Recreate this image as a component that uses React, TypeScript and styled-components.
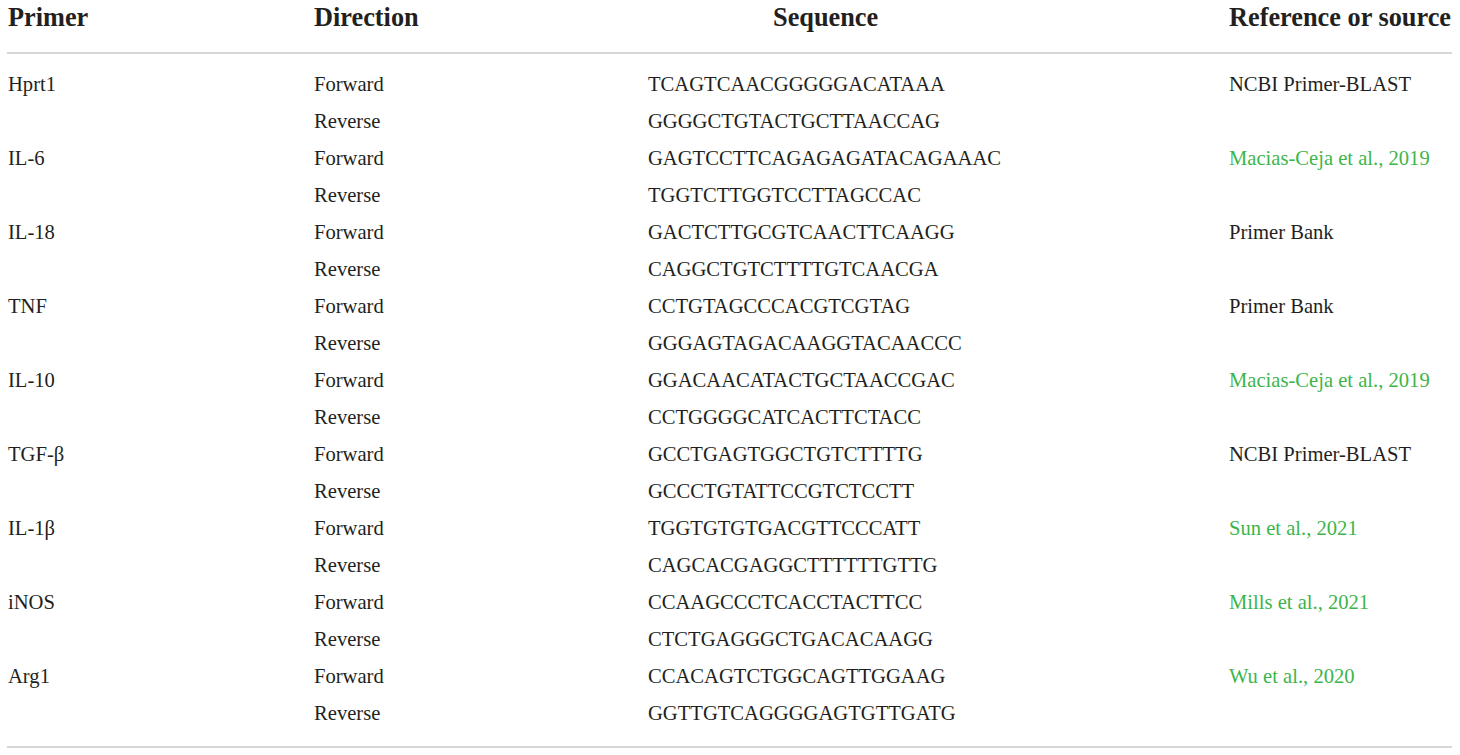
import React from "react";
import styled, { createGlobalStyle } from "styled-components";

const Global = createGlobalStyle`
  html, body { margin: 0; padding: 0; background: #fff; }
  body { font-family: "Liberation Serif", "Times New Roman", serif; color: #231f20; }
`;

const Page = styled.div`
  padding: 0 8px 0 7px;
  width: 1445px;
`;

const Grid = styled.div`
  display: grid;
  grid-template-columns: 306px 334px 581px 1fr;
`;

const Head = styled(Grid)`
  height: 52px;
  border-bottom: 2px solid #d6d6d6;
`;

const HeadCell = styled.div<{ $indent?: number }>`
  font-weight: bold;
  font-size: 26.3px;
  line-height: 36px;
  padding-left: ${(p) => p.$indent ?? 1}px;
  white-space: nowrap;
`;

const Body = styled.div`
  padding: 12px 0 14px;
  border-bottom: 2px solid #d6d6d6;
`;

const Row = styled(Grid)`
  height: 37px;
  align-items: center;
`;

const Cell = styled.div<{ $link?: boolean }>`
  font-size: 20.6px;
  line-height: 37px;
  padding-left: 1px;
  white-space: nowrap;
  color: ${(p) => (p.$link ? "#3db54a" : "#231f20")};
`;

type Primer = { name: string; fwd: string; rev: string; ref: string; link?: boolean };

const data: Primer[] = [
  { name: "Hprt1", fwd: "TCAGTCAACGGGGGACATAAA", rev: "GGGGCTGTACTGCTTAACCAG", ref: "NCBI Primer-BLAST" },
  { name: "IL-6", fwd: "GAGTCCTTCAGAGAGATACAGAAAC", rev: "TGGTCTTGGTCCTTAGCCAC", ref: "Macias-Ceja et al., 2019", link: true },
  { name: "IL-18", fwd: "GACTCTTGCGTCAACTTCAAGG", rev: "CAGGCTGTCTTTTGTCAACGA", ref: "Primer Bank" },
  { name: "TNF", fwd: "CCTGTAGCCCACGTCGTAG", rev: "GGGAGTAGACAAGGTACAACCC", ref: "Primer Bank" },
  { name: "IL-10", fwd: "GGACAACATACTGCTAACCGAC", rev: "CCTGGGGCATCACTTCTACC", ref: "Macias-Ceja et al., 2019", link: true },
  { name: "TGF-β", fwd: "GCCTGAGTGGCTGTCTTTTG", rev: "GCCCTGTATTCCGTCTCCTT", ref: "NCBI Primer-BLAST" },
  { name: "IL-1β", fwd: "TGGTGTGTGACGTTCCCATT", rev: "CAGCACGAGGCTTTTTTGTTG", ref: "Sun et al., 2021", link: true },
  { name: "iNOS", fwd: "CCAAGCCCTCACCTACTTCC", rev: "CTCTGAGGGCTGACACAAGG", ref: "Mills et al., 2021", link: true },
  { name: "Arg1", fwd: "CCACAGTCTGGCAGTTGGAAG", rev: "GGTTGTCAGGGGAGTGTTGATG", ref: "Wu et al., 2020", link: true },
];

export default function App() {
  return (
    <Page>
      <Global />
      <Head>
        <HeadCell>Primer</HeadCell>
        <HeadCell>Direction</HeadCell>
        <HeadCell $indent={126}>Sequence</HeadCell>
        <HeadCell>Reference or source</HeadCell>
      </Head>
      <Body>
        {data.map((p) => (
          <React.Fragment key={p.name}>
            <Row>
              <Cell>{p.name}</Cell>
              <Cell>Forward</Cell>
              <Cell>{p.fwd}</Cell>
              <Cell $link={p.link}>{p.ref}</Cell>
            </Row>
            <Row>
              <Cell />
              <Cell>Reverse</Cell>
              <Cell>{p.rev}</Cell>
              <Cell />
            </Row>
          </React.Fragment>
        ))}
      </Body>
    </Page>
  );
}
